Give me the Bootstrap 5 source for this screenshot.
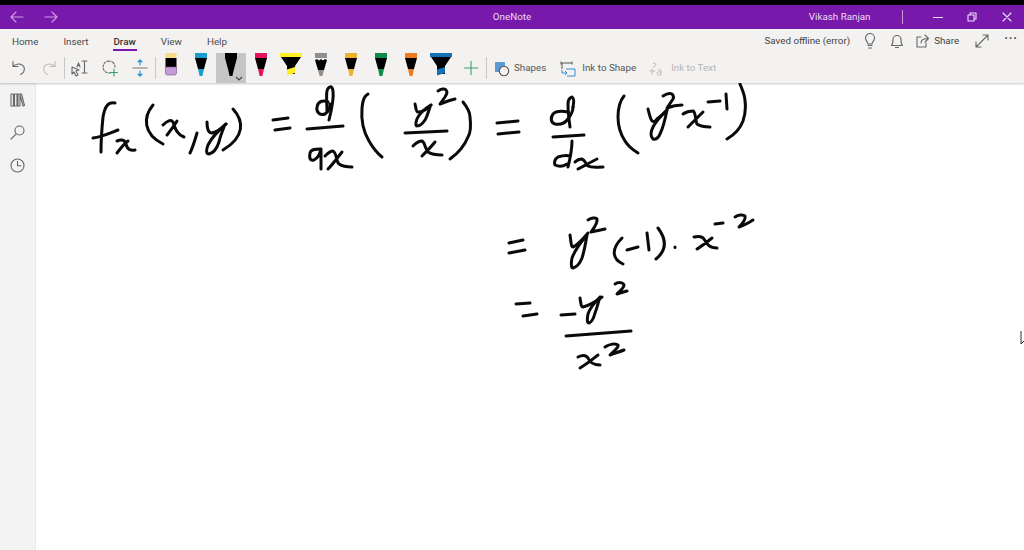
<!DOCTYPE html>
<html lang="en"><head><meta charset="utf-8"><title>OneNote</title>
<link href="https://cdn.jsdelivr.net/npm/bootstrap@5.3.0/dist/css/bootstrap.min.css" rel="stylesheet">
<style>
html,body{height:100%;overflow:hidden;background:#fff}
body{font-family:Roboto,"Open Sans",sans-serif;font-size:9.8px;color:#444}
.onote-top{height:29px;background:#7719aa;border-top:5px solid #000;color:#ecdcf3}
.onote-side{flex:1 1 0}
.onote-back{width:34px;height:24px}
.onote-user{margin-right:31px}
.onote-vsep{width:1px;height:14px;background:#c79ddc;margin-right:18px}
.onote-win{width:34.5px;height:24px}
.onote-ribbon{background:#f3f2f1;height:54px;box-shadow:0 1px 2px rgba(0,0,0,.22);position:relative;z-index:2}
.onote-tabs{height:24px;padding-left:12px;gap:25px}
.onote-tab{position:relative;line-height:26px;color:#4a4a4a}
.onote-tab.on{font-weight:500;color:#333}
.onote-tab.on::after{content:"";position:absolute;left:0;right:-1px;bottom:2px;height:2px;background:#7719aa}
.onote-tools{height:30px;padding-left:4px}
.onote-cell{width:30px;height:30px;flex:none}
.onote-cell.sel{background:#c6c6c6}
.onote-sep{width:1px;height:22px;background:#c8c8c8;flex:none;align-self:center}
.onote-act{height:30px;color:#555;padding-top:1px}
.onote-off{color:#b5b5b5}
.onote-rail{width:36px;background:#f3f3f3;border-right:1px solid #e8e8e8}
.onote-railbtn{height:33px}
.onote-page{position:relative}
.onote-ink{display:block}
.onote-ink path{fill:none;stroke:#0a0a0a;stroke-width:3;stroke-linecap:round;stroke-linejoin:round}
.onote-ink .pointer{stroke:#333;stroke-width:1;fill:#fff;stroke-linecap:butt}
.onote-ico{fill:none;stroke:#666;stroke-width:1.1;stroke-linecap:round;stroke-linejoin:round}
.c-cyan{color:#1b9dcf}.c-pink{color:#e3145f}.c-yellow{color:#fff023}
.c-gold{color:#f0b030}.c-green{color:#0e8a4a}.c-orange{color:#ee7a1e}.c-blue{color:#1570b5}
</style></head>
<body>
<svg width="0" height="0" class="position-absolute">
<symbol id="pen" viewBox="0 0 30 30">
<path fill="currentColor" d="M9 0h12v5H9z"/>
<path fill="#000" d="M9 5h12l-3 11h-6z"/>
<path fill="currentColor" d="M12 16h6l-1.600 7h-2.800z"/>
</symbol>
<symbol id="marker" viewBox="0 0 30 30">
<path fill="currentColor" d="M4 0h22v4H4z"/>
<path fill="#000" d="M5 4h20l-6 9v8l-8 0v-8z"/>
<path fill="currentColor" d="M11 16.500l8-2.500v6l-8 2.500z"/>
</symbol>
</svg>
<div class="d-flex flex-column vh-100">
  <header class="onote-top d-flex align-items-center flex-shrink-0">
    <div class="onote-side d-flex">
      <div class="onote-back d-flex align-items-center justify-content-center"><svg width="14" height="12" viewBox="0 0 14 12" class="onote-ico" style="stroke:#d49be8"><path d="M13 6H1M6 1 1 6l5 5"/></svg></div>
      <div class="onote-back d-flex align-items-center justify-content-center"><svg width="14" height="12" viewBox="0 0 14 12" class="onote-ico" style="stroke:#d49be8"><path d="M1 6h12M8 1l5 5-5 5"/></svg></div>
    </div>
    <div>OneNote</div>
    <div class="onote-side d-flex justify-content-end align-items-center">
      <span class="onote-user">Vikash Ranjan</span><span class="onote-vsep"></span>
      <div class="onote-win d-flex align-items-center justify-content-center"><svg width="10" height="10" viewBox="0 0 10 10" class="onote-ico" style="stroke:#f0e0f6"><path d="M0 5.500h10"/></svg></div>
      <div class="onote-win d-flex align-items-center justify-content-center"><svg width="10" height="10" viewBox="0 0 10 10" class="onote-ico" style="stroke:#f0e0f6"><path d="M1 3h6v6H1zM3 3V1h6v6H7"/></svg></div>
      <div class="onote-win d-flex align-items-center justify-content-center"><svg width="10" height="10" viewBox="0 0 10 10" class="onote-ico" style="stroke:#f0e0f6"><path d="m1 1 8 8M9 1 1 9"/></svg></div>
    </div>
  </header>
  <section class="onote-ribbon flex-shrink-0">
    <div class="d-flex justify-content-between align-items-center">
      <nav class="onote-tabs d-flex">
        <span class="onote-tab">Home</span><span class="onote-tab">Insert</span><span class="onote-tab on">Draw</span><span class="onote-tab">View</span><span class="onote-tab">Help</span>
      </nav>
      <div class="d-flex align-items-center">
        <span>Saved offline (error)</span>
        <svg class="onote-ico" style="margin-left:13px" width="14" height="16" viewBox="0 0 14 16"><path d="M5 12.500h4M5.500 15h3M5 11c0-2-2.500-3-2.500-6a4.500 4.500 0 0 1 9 0c0 3-2.500 4-2.500 6z"/></svg>
        <svg class="onote-ico" style="margin-left:13px" width="14" height="16" viewBox="0 0 14 16"><path d="M1.500 12.500h11c-1.500-1.500-1.500-3-1.500-6a4 4 0 0 0-8 0c0 3 0 4.500-1.500 6zM5.500 14.500h3"/></svg>
        <svg class="onote-ico" style="margin-left:12px" width="13" height="14" viewBox="0 0 13 14"><path d="M5 3H1v10h9V9M5 9c0-3 2-4.500 7-4.500M9 1l3.500 3.500L9 8"/></svg>
        <span style="margin-left:5px">Share</span>
        <svg class="onote-ico" style="margin-left:16px" width="14" height="14" viewBox="0 0 14 14"><path d="m1 13 12-12M8 1h5v5M1 8v5h5"/></svg>
        <span class="fw-bold" style="margin:0 6px 4px 15px;letter-spacing:1px;font-size:12px">···</span>
      </div>
    </div>
    <div class="onote-tools d-flex align-items-center">
      <div class="onote-cell d-flex align-items-center justify-content-center"><svg class="onote-ico" width="16" height="16" viewBox="0 0 16 16"><path d="M2 1.500v5h5M2 6.500c3-3.500 9-3.500 11 .5 1.500 3.500-1 6.500-3.500 7.500"/></svg></div>
      <div class="onote-cell d-flex align-items-center justify-content-center"><svg class="onote-ico" style="stroke:#bdbdbd" width="16" height="16" viewBox="0 0 16 16"><path d="M14 1.500v5H9M14 6.500c-3-3.500-9-3.500-11 .5-1.500 3.500 1 6.500 3.500 7.500"/></svg></div>
      <span class="onote-sep"></span>
      <div class="onote-cell d-flex align-items-center justify-content-center"><svg class="onote-ico" width="18" height="18" viewBox="0 0 18 18"><path d="M1 8l7 3-3 1 2 4-2 1-2-4-2 2zM11 2h5M11 14h5M13.500 2v12M6 8l1.500-4 1.500 4M6.700 6.500h1.600"/></svg></div>
      <div class="onote-cell d-flex align-items-center justify-content-center"><svg width="18" height="18" viewBox="0 0 18 18" class="onote-ico"><path stroke-dasharray="2 1.600" d="M8 2a6 6 0 1 0 2 11.700M8 2a6 6 0 0 1 6 6"/><path style="stroke:#2e9e6b" d="M13 10v7M9.500 13.500h7"/></svg></div>
      <div class="onote-cell d-flex align-items-center justify-content-center"><svg width="16" height="18" viewBox="0 0 16 18" class="onote-ico"><path style="stroke:#777" d="M1 9h14"/><path style="stroke:#1b8ad0" d="M8 1v5M6 3l2-2 2 2M8 12v5M6 15l2 2 2-2"/></svg></div>
      <span class="onote-sep"></span>
      <div class="onote-cell d-flex justify-content-center"><svg width="30" height="30" viewBox="0 0 30 30"><path fill="#f5dc8c" d="M9.500 0h11v5h-11z"/><path fill="#000" d="M9.500 5h11v9h-11z"/><path fill="#c79ad8" stroke="#7a4a90" stroke-width=".6" d="M9.500 14h11v6a2 2 0 0 1-2 2h-7a2 2 0 0 1-2-2z"/></svg></div>
      <div class="onote-cell c-cyan"><svg width="30" height="30"><use href="#pen"/></svg></div>
      <div class="onote-cell sel"><svg width="30" height="30" viewBox="0 0 30 30"><path fill="#000" d="M9 0h12v5H9zM9 5h12l-3 11h-6zM12 16h6l-1.600 7h-2.800z"/><path d="m20 24 3 3 3-3" fill="none" stroke="#444" stroke-width="1.200"/></svg></div>
      <div class="onote-cell c-pink"><svg width="30" height="30"><use href="#pen"/></svg></div>
      <div class="onote-cell c-yellow"><svg width="30" height="30"><use href="#marker"/></svg></div>
      <div class="onote-cell"><svg width="30" height="30" viewBox="0 0 30 30"><path fill="#8f8f8f" d="M9 0h12v5H9z"/><path fill="#000" d="M9 7l2 -1 2 1.500 2-1.500 2 1.500 2-1.500 2 1-3 10h-6z"/><path fill="#8f8f8f" d="M12 17h6l-1.600 6h-2.800z"/></svg></div>
      <div class="onote-cell c-gold"><svg width="30" height="30"><use href="#pen"/></svg></div>
      <div class="onote-cell c-green"><svg width="30" height="30"><use href="#pen"/></svg></div>
      <div class="onote-cell c-orange"><svg width="30" height="30"><use href="#pen"/></svg></div>
      <div class="onote-cell c-blue"><svg width="30" height="30"><use href="#marker"/></svg></div>
      <div class="onote-cell d-flex align-items-center justify-content-center"><svg class="onote-ico" style="stroke:#3f9e6e" width="14" height="14" viewBox="0 0 14 14"><path d="M7 0v14M0 7h14"/></svg></div>
      <span class="onote-sep"></span>
      <div class="onote-act d-flex align-items-center" style="margin-left:7px"><svg width="16" height="16" viewBox="0 0 16 16"><path fill="#5b9bd5" d="M1 1h10v10H1z"/><circle cx="10" cy="10" r="4.700" fill="#f3f2f1" stroke="#555" stroke-width="1.100"/></svg><span style="margin-left:4px">Shapes</span></div>
      <div class="onote-act d-flex align-items-center" style="margin-left:14px"><svg width="16" height="16" viewBox="0 0 16 16" fill="none"><path stroke="#555" d="M1 2h11M1 .5v3M12 .5v3M2 2v6"/><path stroke="#2f8fd0" d="M6 8h9v7H7"/><path stroke="#2f8fd0" d="M2 9v3h5M5 10l2 2-2 2"/></svg><span style="margin-left:6px">Ink to Shape</span></div>
      <div class="onote-act onote-off d-flex align-items-center" style="margin-left:13px"><svg width="15" height="16" viewBox="0 0 15 16" fill="none" stroke="#bbb"><path d="M4 3a1.500 1.500 0 1 1 2 2c-1 1-2 1-2 2M1 10h5M3 8v6M9 9h3v5H9.500a1.500 1.500 0 1 1 0-3H12"/></svg><span style="margin-left:7px">Ink to Text</span></div>
    </div>
  </section>
  <main class="d-flex flex-grow-1 overflow-hidden">
    <aside class="onote-rail d-flex flex-column align-items-center flex-shrink-0">
      <div class="onote-railbtn d-flex align-items-center"><svg class="onote-ico" width="15" height="14" viewBox="0 0 15 14"><path d="M1 1h2.500v12H1zM4.500 1H7v12H4.500zM8 1h2v12H8zM10 1.500l1.500-.5 3 11.500-1.500.5z"/></svg></div>
      <div class="onote-railbtn d-flex align-items-center"><svg class="onote-ico" width="15" height="15" viewBox="0 0 15 15"><circle cx="9.500" cy="5.500" r="4.500"/><path d="M6.200 8.800 1 14"/></svg></div>
      <div class="onote-railbtn d-flex align-items-center"><svg class="onote-ico" width="15" height="15" viewBox="0 0 15 15"><circle cx="7.500" cy="7.500" r="6.500"/><path d="M7.500 3.500v4.200h3.500"/></svg></div>
    </aside>
    <div class="onote-page flex-grow-1">
      <svg class="onote-ink" width="988" height="467" viewBox="36 83 988 467" role="img" aria-label="Handwritten working: f_x(x,y) = d/dx (y^2/x) = d/dx (y^2 x^-1) = y^2 (-1) . x^-2 = -y^2 / x^2">
        <path d="M115 103c-7-1-10 3-12 14-1 10-2 24-2 35M93 138c8-1 17-5 25-8"/>
        <path d="M117 141c5-2 8-1 9 3 1 5 4 7 9 6M128 141c-4 3-8 8-11 12"/>
        <path d="M153 105c-10 12-10 29 10 39"/>
        <path d="M163 125c4-4 8-6 10-3 2 5 3 12 11 15M177 121c-3 5-7 10-10 14"/>
        <path d="M197 133c-2 7-4 14-7 20"/>
        <path d="M207 122c0 6 1 11 5 11 5-1 10-5 14-9"/>
        <path d="M226 124c-7 6-14 13-18 21-2 5-2 9 1 9 5-1 8-6 10-12 1-5 3-10 5-15"/>
        <path d="M233 109c11 12 12 28-10 41"/>
        <path d="M273 120l15-2M275 130l15-2"/>
        <path d="M328 102c-5-2-10-1-11 5-1 5 3 9 8 7 3-2 5-6 5-10"/>
        <path d="M329 120c2-8 5-22 4-29-1-7-5-4-6 0-1 5 0 14 0 20"/>
        <path d="M307 129l36-3"/>
        <path d="M320 149c-4 0-9 0-10 4-1 5 0 8 4 7 4-2 6-6 7-11M321 149v20"/>
        <path d="M325 156c3-3 6-5 8-5 4 2 3 11 6 13 3 2 8 3 13 3M342 152c-4 5-9 12-14 17"/>
        <path d="M368 94c-3 2-5 4-6 14-1 12 1 23 7 33 4 7 8 12 13 16"/>
        <path d="M415 104c1 4 1 8 3 8 3 0 5-1 7-2 2-1 4-3 6-5"/>
        <path d="M431 105c-5 3-10 7-13 12-2 3-3 9-1 9 3 0 6-3 8-6 2-3 3-7 5-13"/>
        <path d="M438 91c3-2 7-3 8-1 2 2 1 4-1 7l-5 7c5-2 10-4 15-5"/>
        <path d="M405 133l42-2"/>
        <path d="M413 146c3-3 6-5 9-5 3 1 3 8 6 11 3 2 9 3 14 3M435 142c-4 5-9 10-13 14"/>
        <path d="M463 102c4 5 7 10 7 15 1 8 1 15-2 20-4 10-11 17-18 22"/>
        <path d="M497 123l21-2M498 134l21-2"/>
        <path d="M568 112c-5-1-12-1-15 2-3 4-2 9 2 10 5 1 10-1 13-5 3-4 5-8 5-12"/>
        <path d="M573 107c1-5 1-9-1-10-3 1-4 4-4 7 0 7 1 16 2 23"/>
        <path d="M553 137l31-2"/>
        <path d="M570 156c-4-1-9 0-12 1-3 2-4 5-3 8 4 2 9 1 12-1M572 141c0 8-2 18-4 26"/>
        <path d="M575 162c2-2 5-3 7-3 3 1 4 5 6 7 4 2 9 1 15 1M597 159c-6 3-13 7-19 10"/>
        <path d="M624 96c-5 6-6 14-6 21 0 10 3 18 7 24 3 5 8 9 13 12"/>
        <path d="M648 109c1 4 2 9 4 12 2 1 4 0 5-2 4-3 7-6 10-9"/>
        <path d="M667 110c-5 5-11 11-14 17-2 4-3 9 0 12 3 1 6-2 7-5 2-4 4-9 7-24"/>
        <path d="M663 96c3-2 7-3 9-2 2 2 2 3 1 5l-6 9c5-2 10-3 15-3"/>
        <path d="M683 114c3-2 7-3 10-3 3 1 2 9 4 13 3 2 8 3 13 3M703 112c-5 5-10 10-15 15"/>
        <path d="M708 102l12-1M726 94l1 15"/>
        <path d="M740 84c2 5 5 11 5 17 1 7 0 14-2 20-3 8-9 14-16 18"/>
        <path d="M509 243l14-3M509 253l16-3"/>
        <path d="M570 235c1 6 1 12 3 12 5-2 10-8 15-14"/>
        <path d="M587 235c-6 7-12 15-15 23-1 5-1 10 1 10 4-1 7-5 9-10 2-6 3-11 5-23"/>
        <path d="M588 220c3-2 8-3 9-1 1 4-3 9-6 13 5-1 10-2 14-3"/>
        <path d="M622 238c-11 11-10 21 1 26"/>
        <path d="M627 250l11-3"/>
        <path d="M647 233l2 17"/>
        <path d="M658 228c9 12 9 22-2 31"/>
        <path d="M675 247v.500" stroke-width="2"/>
        <path d="M694 237c4-1 8-1 10 2 3 5 5 9 13 9M712 238c-5 4-10 8-15 11"/>
        <path d="M715 224l8-1"/>
        <path d="M735 217c3-2 8-3 10-1 1 3-3 8-6 11 5-2 10-4 14-7"/>
        <path d="M516 304l14-1M523 316l14-2"/>
        <path d="M561 315l14-1"/>
        <path d="M580 298c1 6 1 9 3 9 5-1 14-6 19-10"/>
        <path d="M600 297c-5 5-10 11-12 17-1 5-1 9 1 9 3-1 5-6 6-10 2-5 3-10 5-16"/>
        <path d="M615 284c3-2 8-2 9 1 0 3-4 6-7 9 3-1 6-2 10-3"/>
        <path d="M566 336l65-5"/>
        <path d="M578 357c4-2 8-2 10 1 2 5 5 7 12 7M598 355c-5 4-11 9-18 13"/>
        <path d="M605 347c4-3 11-4 13-2 1 2-4 6-8 10 5-2 9-3 14-5"/>
        <path class="pointer" d="M1021 331v13l3-3"/>
      </svg>
    </div>
  </main>
</div>
<script src="https://cdn.jsdelivr.net/npm/bootstrap@5.3.0/dist/js/bootstrap.bundle.min.js"></script>
</body></html>
